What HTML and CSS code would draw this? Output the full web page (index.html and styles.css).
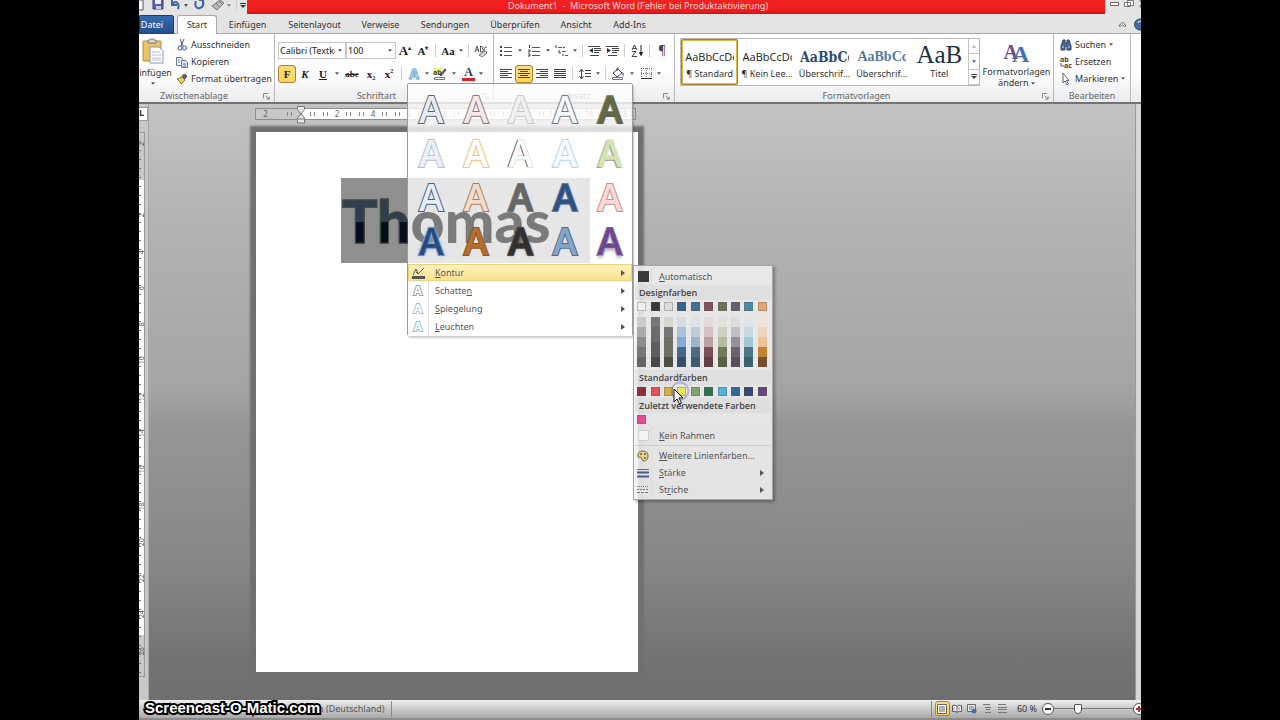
FILE: index.html
```html
<!DOCTYPE html>
<html lang="de">
<head>
<meta charset="utf-8">
<title>Dokument1 - Microsoft Word</title>
<link rel="stylesheet" href="styles.css">
</head>
<body>
<svg class="defs" aria-hidden="true">
  <symbol id="caret" viewBox="0 0 6 4"><path d="M0 0h6L3 4z" fill="#555"/></symbol>
  <symbol id="launch" viewBox="0 0 8 8"><path d="M.5 6V.5H6M3 3l4 4M7 4v3H4" fill="none" stroke="#777"/></symbol>
  <symbol id="right" viewBox="0 0 4 6"><path d="M0 0v6l4-3z" fill="#555"/></symbol>
</svg>
<div class="screen">
  <header class="title-row">
    <div class="quick">
      <button aria-label="Word" class="q-word"><svg width="6" height="13" viewBox="0 0 6 13"><path d="M0 0h4v10H0" fill="#fff" stroke="#456"/></svg></button>
      <button aria-label="Speichern"><svg width="12" height="13" viewBox="0 0 12 13"><path d="M1 -2h10v11H1z" fill="#5a5fae" stroke="#37407c"/><path d="M3 0h6v4H3z" fill="#eef"/><path d="M4 6h5v3H4z" fill="#ccd"/></svg></button>
      <button aria-label="Rückgängig"><svg width="20" height="13" viewBox="0 0 20 13"><path d="M3 0v5h5M3 4c4-4 8-1 6 5" fill="none" stroke="#3c64a6" stroke-width="2"/><path d="M15 4h4l-2 3z" fill="#555"/></svg></button>
      <button aria-label="Wiederholen"><svg width="12" height="13" viewBox="0 0 12 13"><path d="M2 1c-2 5 1 8 4 7 4-1 4-6 2-8M5 0h4v4" fill="none" stroke="#3c64a6" stroke-width="2"/></svg></button>
      <button aria-label="Formen"><svg width="20" height="13" viewBox="0 0 20 13"><path d="M1 6l8-6 4 3-7 7zM5 3l4 5M8 1l4 4" fill="#bbb" stroke="#777"/><path d="M16 4h4l-2 3z" fill="#888"/></svg></button>
      <i class="sep"></i>
      <button aria-label="Anpassen"><svg width="6" height="8" viewBox="0 0 6 8"><path d="M0 3.500h6" stroke="#333"/><path d="M0 5h6L3 8z" fill="#333"/></svg></button>
    </div>
    <div class="title">Dokument1&nbsp; - &nbsp;Microsoft Word (Fehler bei Produktaktivierung)</div>
    <div class="window-buttons">
      <button aria-label="Minimieren"><svg width="9" height="8" viewBox="0 0 9 8"><path d="M.5 2.500h8v3h-8z" fill="#fff" stroke="#666"/></svg></button>
      <button aria-label="Wiederherstellen"><svg width="10" height="8" viewBox="0 0 10 8"><path d="M3.500 .5h6v5h-6zM.5 2.500h6v4h-6z" fill="#fff" stroke="#777"/></svg></button>
      <button aria-label="Schließen"><svg width="8" height="8" viewBox="0 0 8 8"><path d="M1 0l6 7M7 0L1 7" stroke="#777" stroke-width="2"/></svg></button>
    </div>
  </header>

  <nav class="tabs">
    <button class="tab file">Datei</button>
    <button class="tab active">Start</button>
    <button class="tab t-einf">Einfügen</button>
    <button class="tab t-seit">Seitenlayout</button>
    <button class="tab t-verw">Verweise</button>
    <button class="tab t-send">Sendungen</button>
    <button class="tab t-uber">Überprüfen</button>
    <button class="tab t-ansi">Ansicht</button>
    <button class="tab t-addi">Add-Ins</button>
    <span class="tab-tools">
      <svg width="9" height="7" viewBox="0 0 9 7"><path d="M1 5l3.500-4L8 5q-2 1-3.500-1Q3 6 1 5z" fill="#fff" stroke="#666"/></svg>
      <svg width="7" height="13" viewBox="0 0 7 13"><circle cx="6" cy="6.500" r="5.500" fill="#456f9f" stroke="#345"/><path d="M4 5q0-2 3-2" stroke="#fff" fill="none"/></svg>
    </span>
  </nav>

  <section class="ribbon">
    <div class="group g-clip">
      <div class="group-body">
        <button class="paste">
          <svg width="24" height="26" viewBox="0 0 24 26"><rect x="2" y="3" width="18" height="20" rx="1" fill="#eec266" stroke="#b98a37"/><path d="M7 5V2h2q2-3 4 0h2v3z" fill="#ddd" stroke="#777"/><path d="M9 9h9l4 4v12H9z" fill="#fff" stroke="#8a9bb5"/><path d="M11 14h8M11 17h9M11 20h9M11 22h9" stroke="#b5c0d0"/></svg>
          <span>Einfügen</span>
          <svg width="4" height="3"><use href="#caret"/></svg>
        </button>
        <div class="stack">
          <button><svg width="12" height="12" viewBox="0 0 12 12"><path d="M4 0l3 7M8 0L5 7" stroke="#556" fill="none"/><circle cx="4" cy="9" r="2" fill="none" stroke="#2f5ca5"/><circle cx="8.500" cy="9" r="2" fill="none" stroke="#2f5ca5"/></svg>Ausschneiden</button>
          <button><svg width="12" height="12" viewBox="0 0 12 12"><path d="M.5 1.500h5l1 2v6h-6z" fill="#fff" stroke="#5579b0"/><path d="M5.500 4.500h4l2 2v5h-6z" fill="#dce8fa" stroke="#5579b0"/><path d="M7 8h3M7 10h3M2 4h2M2 6h2" stroke="#5579b0"/></svg>Kopieren</button>
          <button><svg width="12" height="12" viewBox="0 0 12 12"><path d="M8 1l3 2-3 4-3-2z" fill="#667" stroke="#445"/><path d="M1 6l5-2 3 3-4 4q-1-3-4-5z" fill="#f0cf63" stroke="#857431"/></svg>Format übertragen</button>
        </div>
      </div>
      <div class="group-name">Zwischenablage<svg class="launch" width="7" height="7"><use href="#launch"/></svg></div>
    </div>

    <div class="group g-font">
      <div class="group-body rows">
        <div class="row">
          <span class="combo c-font"><select aria-label="Schriftart"><option>Calibri (Textkörper)</option></select><svg width="4" height="3"><use href="#caret"/></svg></span>
          <span class="combo c-size"><select aria-label="Schriftgrad"><option>100</option></select><svg width="4" height="3"><use href="#caret"/></svg></span>
          <button class="ic serif big" aria-label="Vergrößern">A<sup>▴</sup></button>
          <button class="ic serif mid" aria-label="Verkleinern">A<sup>▾</sup></button>
          <i class="sep"></i>
          <button class="ic serif mid">Aa</button><button class="ar slim" aria-label="Mehr"><svg width="4" height="3"><use href="#caret"/></svg></button>
          <i class="sep"></i>
          <button class="ic" aria-label="Formatierung löschen"><svg width="14" height="14" viewBox="0 0 14 14"><path d="M1 8l2-6 2 6M2 6h3M6.500 2v6h2q2-2 0-3 2-2-2-3M13 3q-3 0-3 2.500t3 2.500" fill="none" stroke="#555"/><path d="M5 11l6-4 2 2-5 4z" fill="#ddd" stroke="#777"/></svg></button>
        </div>
        <div class="row">
          <button class="ic serif on">F</button><button class="ic serif it">K</button><button class="ic serif un">U</button><button class="ar" aria-label="Mehr"><svg width="4" height="3"><use href="#caret"/></svg></button>
          <button class="ic serif st">abc</button><button class="ic serif">x<sub>2</sub></button><button class="ic serif">x<sup>2</sup></button>
          <i class="sep"></i>
          <button class="ic fx-a">A</button><button class="ar slim" aria-label="Mehr"><svg width="4" height="3"><use href="#caret"/></svg></button>
          <button class="ic" aria-label="Hervorheben"><svg width="14" height="14" viewBox="0 0 14 14"><path d="M1 1h8v7H1z" fill="#f1ee78"/><text x="0" y="8" class="tiny-icon">ab</text><path d="M7 8l5-6 1 1-5 6z" fill="#777" stroke="#444"/><path d="M1.500 10.500h10v2h-10z" fill="#fff" stroke="#777"/></svg></button><button class="ar" aria-label="Mehr"><svg width="4" height="3"><use href="#caret"/></svg></button>
          <button class="ic serif red-a">A</button><button class="ar slim" aria-label="Mehr"><svg width="4" height="3"><use href="#caret"/></svg></button>
        </div>
      </div>
      <div class="group-name">Schriftart<svg class="launch" width="7" height="7"><use href="#launch"/></svg></div>
    </div>

    <div class="group g-para">
      <div class="group-body rows">
        <div class="row">
          <button class="ic" aria-label="Aufzählung"><svg width="12" height="12" viewBox="0 0 12 12"><path d="M0 2h2M0 6h2M0 10h2" stroke="#345" stroke-width="2"/><path d="M4 2.500h8M4 6.500h8M4 10.500h8" stroke="#555"/></svg></button><button class="ar" aria-label="Mehr"><svg width="4" height="3"><use href="#caret"/></svg></button>
          <button class="ic" aria-label="Nummerierung"><svg width="12" height="12" viewBox="0 0 12 12"><path d="M1.500 0v3M0 5h2v2H0M0 9h2v2H0" stroke="#345" fill="none"/><path d="M4 2.500h8M4 6.500h8M4 10.500h8" stroke="#555"/></svg></button><button class="ar" aria-label="Mehr"><svg width="4" height="3"><use href="#caret"/></svg></button>
          <button class="ic" aria-label="Liste mit mehreren Ebenen"><svg width="13" height="12" viewBox="0 0 13 12"><path d="M1 0v3M4 5v3h2M8 9v2" stroke="#345" fill="none"/><path d="M3 2.500h7M7 6.500h5M10 10.500h3" stroke="#555" stroke-dasharray="4 1"/></svg></button><button class="ar slim" aria-label="Mehr"><svg width="4" height="3"><use href="#caret"/></svg></button>
          <i class="sep"></i>
          <button class="ic" aria-label="Einzug verkleinern"><svg width="13" height="12" viewBox="0 0 13 12"><path d="M0 1.500h12M6 3.500h7M6 5.500h7M6 7.500h5M2 10.500h9" stroke="#444"/><path d="M5 3v5L1 5.500z" fill="#235"/></svg></button>
          <button class="ic" aria-label="Einzug vergrößern"><svg width="13" height="12" viewBox="0 0 13 12"><path d="M0 1.500h12M6 3.500h7M6 5.500h7M6 7.500h5M2 10.500h9" stroke="#444"/><path d="M1 3v5l4-2.500z" fill="#235"/></svg></button>
          <i class="sep"></i>
          <button class="ic" aria-label="Sortieren"><svg width="13" height="13" viewBox="0 0 13 13"><path d="M1 6l2.500-5L6 6M2 4.500h3M1 7.500h4l-4 5h5" fill="none" stroke="#444"/><path d="M10 1v9M8.500 8.500l1.500 3 1.500-3z" fill="#222" stroke="#222"/></svg></button>
          <i class="sep"></i>
          <button class="ic pil">¶</button>
        </div>
        <div class="row">
          <button class="ic" aria-label="Links"><svg width="12" height="11" viewBox="0 0 12 11"><path d="M0 1.500h12M0 3.500h8M0 5.500h12M0 7.500h8M0 9.500h12" stroke="#444"/></svg></button>
          <button class="ic on" aria-label="Zentriert"><svg width="12" height="11" viewBox="0 0 12 11"><path d="M0 1.500h12M2 3.500h8M0 5.500h12M2 7.500h8M0 9.500h12" stroke="#554a1a"/></svg></button>
          <button class="ic" aria-label="Rechts"><svg width="12" height="11" viewBox="0 0 12 11"><path d="M0 1.500h12M4 3.500h8M0 5.500h12M4 7.500h8M0 9.500h12" stroke="#444"/></svg></button>
          <button class="ic" aria-label="Blocksatz"><svg width="12" height="11" viewBox="0 0 12 11"><path d="M0 1.500h12M0 3.500h12M0 5.500h12M0 7.500h12M0 9.500h12" stroke="#444"/></svg></button>
          <i class="sep"></i>
          <button class="ic" aria-label="Zeilenabstand"><svg width="12" height="12" viewBox="0 0 12 12"><path d="M2.500 2v8M.5 4l2-3 2 3M.5 8l2 3 2-3" stroke="#357" fill="none"/><path d="M6 2.500h6M6 5.500h6M6 8.500h6" stroke="#444"/></svg></button><button class="ar slim" aria-label="Mehr"><svg width="4" height="3"><use href="#caret"/></svg></button>
          <i class="sep"></i>
          <button class="ic" aria-label="Schattierung"><svg width="14" height="13" viewBox="0 0 14 13"><path d="M2 6l5-4 4 4-5 4zM6 4q-1-4 2-3" fill="#fff" stroke="#445"/><path d="M11 5q3 1 1 5z" fill="#3c64a6"/><path d="M1.500 10.500h10v2h-10z" fill="#fff" stroke="#777"/></svg></button><button class="ar" aria-label="Mehr"><svg width="4" height="3"><use href="#caret"/></svg></button>
          <button class="ic" aria-label="Rahmen"><svg width="11" height="11" viewBox="0 0 11 11"><path d="M.5 0v10M5.500 0v10M10.500 0v10M0 .5h11M0 5.500h11" stroke="#777" stroke-dasharray="1 1"/><path d="M0 10.500h11" stroke="#333"/></svg></button><button class="ar slim" aria-label="Mehr"><svg width="4" height="3"><use href="#caret"/></svg></button>
        </div>
      </div>
      <div class="group-name">Absatz<svg class="launch" width="7" height="7"><use href="#launch"/></svg></div>
    </div>

    <div class="group g-styles">
      <div class="group-body">
        <div class="style-gallery">
          <button class="style chosen"><b class="s-norm">AaBbCcDc</b><span>¶ Standard</span></button>
          <button class="style"><b class="s-norm">AaBbCcDc</b><span>¶ Kein Lee...</span></button>
          <button class="style"><b class="s-h1">AaBbCc</b><span>Überschrif...</span></button>
          <button class="style"><b class="s-h2">AaBbCc</b><span>Überschrif...</span></button>
          <button class="style"><b class="s-title">AaB</b><span>Titel</span></button>
          <div class="scroller">
            <button aria-label="Nach oben"><svg class="flip" width="4" height="3"><use href="#caret"/></svg></button>
            <button aria-label="Nach unten"><svg width="4" height="3"><use href="#caret"/></svg></button>
            <button aria-label="Alle"><svg width="6" height="6" viewBox="0 0 6 6"><path d="M0 .5h6" stroke="#444"/><path d="M0 2h6L3 5z" fill="#444"/></svg></button>
          </div>
        </div>
        <button class="change">
          <span class="change-icon"><b>A</b><b>A</b></span>
          <span>Formatvorlagen</span>
          <span>ändern <svg width="4" height="3"><use href="#caret"/></svg></span>
        </button>
      </div>
      <div class="group-name">Formatvorlagen<svg class="launch" width="7" height="7"><use href="#launch"/></svg></div>
    </div>

    <div class="group g-edit">
      <div class="group-body">
        <div class="stack">
          <button><svg width="12" height="12" viewBox="0 0 12 12"><path d="M3 1h2v3h2V1h2l2 6v4H7V7H5v4H1V7z" fill="#4a6795" stroke="#2c4368"/><path d="M2 8h2M8 8h2" stroke="#cde"/></svg>Suchen <svg class="c" width="4" height="3"><use href="#caret"/></svg></button>
          <button><svg width="12" height="12" viewBox="0 0 12 12"><text x="0" y="6" class="tiny-icon">ab</text><text x="4" y="12" class="tiny-icon">ac</text><path d="M1 7v3h3" stroke="#357" fill="none"/></svg>Ersetzen</button>
          <button><svg width="12" height="12" viewBox="0 0 12 12"><path d="M3 0v10l2-2 2 4 1.500-1-2-3.500H9z" fill="#fff" stroke="#567"/></svg>Markieren <svg class="c" width="4" height="3"><use href="#caret"/></svg></button>
        </div>
      </div>
      <div class="group-name">Bearbeiten</div>
    </div>
  </section>

  <main class="workspace">
    <div class="v-side">
      <span class="tab-box">L</span>
      <div class="v-ruler"><span class="first">2</span><span></span><span>2</span><span>4</span><span>6</span><span>8</span><span>10</span><span>12</span><span>14</span><span>16</span><span>18</span><span>20</span><span>22</span><span>24</span><span>26</span></div>
    </div>
    <div class="canvas">
      <div class="h-ruler">
        <span>2</span><span class="zero"><svg width="10" height="18" viewBox="0 0 10 18"><path d="M1.500 .5h7v3L5 8l3.500 4v5h-7v-5L5 8 1.500 3.500zM1.500 13h7" fill="#e6e6e6" stroke="#777"/></svg></span><span>2</span><span>4</span><span>6</span><span>8</span><span>10</span><span>12</span><span>14</span><span>16</span><span>18</span>
      </div>
      <article class="page">
        <div class="selection"><p class="word"><span class="lead">Th</span><span class="rest">omas</span></p></div>
      </article>
    </div>
    <div class="v-scroll"></div>
  </main>

  <footer class="status">
    <span class="lang">Deutsch (Deutschland)</span>
    <i class="st-sep"></i>
    <span class="grow"></span>
    <i class="st-sep"></i>
    <button class="view on" aria-label="Seitenlayout"><svg width="10" height="10" viewBox="0 0 10 10"><path d="M.5 .5h9v9h-9z" fill="#fff" stroke="#666"/><path d="M2 3h6M2 5h6M2 7h6" stroke="#666"/></svg></button>
    <button class="view" aria-label="Lesen"><svg width="10" height="10" viewBox="0 0 10 10"><path d="M.5 1.500q3-1 4.500 1 1.500-2 4.500-1v6q-3-1-4.500 1-1.500-2-4.500-1zM5 2v6" fill="#fff" stroke="#555"/><path d="M2 3v3M7 3v3" stroke="#888"/></svg></button>
    <button class="view" aria-label="Weblayout"><svg width="10" height="10" viewBox="0 0 10 10"><path d="M.5 .5h8v7h-8z" fill="#eee" stroke="#666"/><path d="M2 3h5M2 5h3" stroke="#666"/><circle cx="7" cy="7" r="2.500" fill="#4a6c96"/></svg></button>
    <button class="view" aria-label="Gliederung"><svg width="9" height="9" viewBox="0 0 9 9"><path d="M0 .5h7M2 3.500h6M3 5.500h4M2 8.500h6" stroke="#777"/></svg></button>
    <button class="view" aria-label="Entwurf"><svg width="9" height="9" viewBox="0 0 9 9"><path d="M0 .5h8M0 3.500h9M0 5.500h9M0 8.500h9" stroke="#777"/></svg></button>
    <span class="pct">60 %</span>
    <button class="round" aria-label="Verkleinern"><svg width="12" height="12" viewBox="0 0 12 12"><circle cx="6" cy="6" r="5.500" fill="#fff" stroke="#555"/><path d="M3 6h6" stroke="#333" stroke-width="2"/></svg></button>
    <input class="zoom" type="range" min="10" max="190" value="60" aria-label="Zoom">
    <button class="round plus" aria-label="Vergrößern"><svg width="12" height="12" viewBox="0 0 12 12"><circle cx="6" cy="6" r="5.500" fill="#fff" stroke="#555"/><path d="M3 6h6M6 3v6" stroke="#a33" stroke-width="2"/></svg></button>
  </footer>

  <div class="menu-back"></div>
  <div class="menu" role="menu">
    <div class="gallery">
      <button class="g a1">A</button><button class="g a2">A</button><button class="g a3">A</button><button class="g a4">A</button><button class="g a5">A</button>
      <button class="g b1">A</button><button class="g b2">A</button><button class="g b3">A</button><button class="g b4">A</button><button class="g b5">A</button>
      <button class="g c1">A</button><button class="g c2">A</button><button class="g c3">A</button><button class="g c4">A</button><button class="g c5">A</button>
      <button class="g d1">A</button><button class="g d2">A</button><button class="g d3">A</button><button class="g d4">A</button><button class="g d5">A</button>
    </div>
    <div class="items">
      <button class="item hot"><span class="mi"><svg width="13" height="12" viewBox="0 0 13 12"><path d="M0 10.500h13" stroke="#555" stroke-width="3"/><path d="M1 8l3-6 2 5 6-6M6 7L4 5" fill="none" stroke="#555"/></svg></span><span class="ml"><u>K</u>ontur</span><svg width="4" height="6"><use href="#right"/></svg></button>
      <button class="item"><span class="mi m1">A</span><span class="ml">Schatte<u>n</u></span><svg width="4" height="6"><use href="#right"/></svg></button>
      <button class="item"><span class="mi m2">A</span><span class="ml"><u>S</u>piegelung</span><svg width="4" height="6"><use href="#right"/></svg></button>
      <button class="item"><span class="mi m3">A</span><span class="ml"><u>L</u>euchten</span><svg width="4" height="6"><use href="#right"/></svg></button>
    </div>
  </div>

  <div class="submenu" role="menu">
    <button class="sub"><span class="si"><i class="auto"></i></span><span class="sl"><u>A</u>utomatisch</span></button>
    <h2>Designfarben</h2>
    <div class="swatches">
      <i class="k-white"></i><i class="k-black"></i><i class="k-light"></i><i class="k-blue"></i><i class="k-steel"></i><i class="k-wine"></i><i class="k-olive"></i><i class="k-grape"></i><i class="k-aqua"></i><i class="k-orange"></i>
    </div>
    <div class="shades">
      <i class="h1"></i><i class="h2"></i><i class="h3"></i><i class="h4"></i><i class="h5"></i><i class="h6"></i><i class="h7"></i><i class="h8"></i><i class="h9"></i><i class="h10"></i>
    </div>
    <h2>Standardfarben</h2>
    <div class="swatches">
      <i class="n1"></i><i class="n2"></i><i class="n3"></i><i class="n4"></i><i class="n5"></i><i class="n6"></i><i class="n7"></i><i class="n8"></i><i class="n9"></i><i class="n10"></i>
    </div>
    <h2>Zuletzt verwendete Farben</h2>
    <div class="swatches recent"><i class="pink"></i></div>
    <button class="sub none"><span class="si"><i class="empty"></i></span><span class="sl"><u>K</u>ein Rahmen</span></button>
    <button class="sub"><span class="si"><svg width="12" height="12" viewBox="0 0 12 12"><path d="M6 1q5 0 5 5 0 5-5 5-1 0-1-2T1 7Q0 1 6 1z" fill="#e6d28a" stroke="#7a6a3a"/><circle cx="4" cy="4" r="1" fill="#a33"/><circle cx="8" cy="4" r="1" fill="#36a"/><circle cx="8" cy="8" r="1" fill="#383"/></svg></span><span class="sl"><u>W</u>eitere Linienfarben...</span></button>
    <button class="sub"><span class="si"><svg width="12" height="10" viewBox="0 0 12 10"><path d="M0 1.500h12" stroke="#566b9a"/><path d="M0 4.500h12" stroke="#455a8a" stroke-width="2"/><path d="M0 8.500h12" stroke="#455a8a" stroke-width="2"/></svg></span><span class="sl"><u>S</u>tärke</span><svg width="4" height="6"><use href="#right"/></svg></button>
    <button class="sub"><span class="si"><svg width="12" height="9" viewBox="0 0 12 9"><path d="M0 1.500h12" stroke="#777" stroke-dasharray="1 1"/><path d="M0 4.500h12" stroke="#777" stroke-dasharray="2 1"/><path d="M0 7.500h12" stroke="#777" stroke-dasharray="3 1"/></svg></span><span class="sl">St<u>r</u>iche</span><svg width="4" height="6"><use href="#right"/></svg></button>
  </div>

  <svg class="pointer" width="26" height="26" viewBox="0 0 26 26"><circle cx="12" cy="11" r="8.500" fill="none" stroke="#7d78b8" stroke-width="2" opacity=".45"/><path d="M6 9v13l3-3 2.500 5 2-1-2.500-5h4z" fill="#fff" stroke="#111"/></svg>
  <div class="watermark">Screencast-O-Matic.com</div>
</div>
</body>
</html>
```
FILE: styles.css
```css
* { box-sizing: border-box; }
body { margin: 0; padding: 0 139px; background: #000; font: 9px/12px "Noto Sans", sans-serif; color: #333; }
button, select, input { font: inherit; color: inherit; padding: 0; margin: 0; border: 0; background: none; }
button { display: flex; align-items: center; justify-content: center; white-space: nowrap; }
svg { flex: none; display: block; }
i { display: block; flex: none; }
.defs { position: absolute; width: 0; height: 0; }
.screen { position: relative; display: flex; flex-direction: column; min-height: 100vh; overflow: hidden; background: #e4e4e4; }

/* title row */
.title-row { display: flex; height: 14px; }
.quick { display: flex; align-items: flex-start; width: 108px; gap: 5px; }
.quick .sep { height: 11px; margin: 0 -2px 0 0; width: 1px; }
.q-word { width: 8px; justify-content: flex-start; }
.title { flex: 1; padding-right: 76px; background: linear-gradient(#f32222, #ee1c1c 80%, #c91414); color: #fbd9d5; text-align: center; line-height: 12px; white-space: nowrap; }
.window-buttons { display: flex; width: 36px; padding-left: 5px; gap: 5px; align-items: flex-start; }

/* tabs */
.tabs { display: flex; height: 20px; padding-top: 1px; border-bottom: 1px solid #a9a9a9; background: #e4e4e4; }
.tab { height: 19px; }
.file { width: 35px; padding-right: 9px; margin-right: 3px; color: #fff; background: linear-gradient(#356ab0, #234f8f); border: 1px solid #1c3f74; border-radius: 0 2px 0 0; }
.active { width: 40px; height: 20px; padding-bottom: 2px; background: #fff; border: 1px solid #a9a9a9; border-bottom: 0; border-radius: 3px 3px 0 0; }
.t-einf { width: 61px; }
.t-seit { width: 73px; }
.t-verw { width: 59px; }
.t-send { width: 70px; }
.t-uber { width: 70px; }
.t-ansi { width: 52px; }
.t-addi { width: 55px; }
.tab-tools { display: flex; flex: 1; justify-content: flex-end; align-items: center; gap: 7px; }

/* ribbon */
.ribbon { display: flex; height: 70px; background: linear-gradient(#fff, #fdfdfd 60%, #eaebed); border-bottom: 2px solid #737373; }
.group { display: flex; flex-direction: column; border-right: 1px solid #b9b9b9; overflow: hidden; }
.group-body { display: flex; flex: 1; padding-top: 2px; }
.group-name { position: relative; height: 13px; line-height: 13px; text-align: center; color: #666; }
.launch { position: absolute; right: 4px; top: 4px; }
.g-clip { width: 136px; }
.g-font { width: 219px; }
.g-para { width: 181px; }
.g-styles { width: 379px; }
.g-edit { width: 77px; }
.g-clip .group-name { padding-right: 25px; }
.g-font .group-name, .g-para .group-name, .g-styles .group-name { padding-right: 15px; }
.paste { flex-direction: column; width: 38px; margin: 0 0 3px -5px; gap: 3px; }
.stack { display: flex; flex-direction: column; }
.stack button { height: 17px; gap: 3px; justify-content: flex-start; }
.g-clip .stack { padding-left: 4px; }
.g-edit .stack { padding-left: 6px; }
.rows { flex-direction: column; gap: 4px; padding: 7px 3px 0; }
.row { display: flex; height: 19px; align-items: center; }
.combo { position: relative; display: flex; align-items: center; height: 17px; border: 1px solid #c6c6c6; background: #fff; }
.combo select { appearance: none; width: 100%; padding: 0 10px 0 1px; outline: 0; color: #222; text-overflow: clip; }
.combo svg { position: absolute; right: 3px; top: 6px; }
.c-font { width: 68px; }
.c-size { width: 50px; }
.ic { width: 18px; height: 18px; color: #222; }
.ar { width: 10px; height: 18px; }
.ar.slim { width: 8px; }
.sep { width: 1px; height: 13px; margin: 0 3px; background: #cfcfcf; }
.serif { font: bold 11px/12px "Liberation Serif", serif; }
.serif sup, .serif sub { font-size: 6px; line-height: 6px; }
.serif sup { align-self: flex-start; margin-top: 3px; }
.serif sub { align-self: flex-end; margin-bottom: 2px; }
.big { font-size: 13px; }
.it { font-style: italic; }
.un { text-decoration: underline; }
.st { width: 20px; font-size: 9px; text-decoration: line-through; }
.on { background: linear-gradient(#fbdc7c, #f9d45e); border: 1px solid #a8862f; border-radius: 3px; }
.fx-a { font: bold 14px/14px "Open Sans", sans-serif; color: #d9eefb; -webkit-text-stroke: 1px #6aa5d0; }
.red-a { height: 14px; font-size: 12px; line-height: 10px; color: #2b3a63; border-bottom: 3px solid #d8232a; width: 13px; margin: 0 2px 0 3px; }
.tiny-icon { font: bold 7px "Noto Sans", sans-serif; fill: #444; }
.pil { font-size: 12px; color: #444; }
.style-gallery { display: flex; height: 48px; width: 300px; margin: 2px 0 0 5px; border: 1px solid #b8b8b8; background: #fff; }
.style { flex: 1 1 20px; flex-direction: column; justify-content: flex-end; padding-bottom: 5px; min-width: 0; overflow: hidden; }
.style b { display: block; width: 49px; overflow: hidden; font-weight: 400; }
.chosen { border: 2px solid #e3b73a; border-radius: 2px; outline: 1px solid #a78334; outline-offset: -1px; padding-bottom: 3px; }
.style .s-norm { font: 11px/22px "Open Sans", sans-serif; color: #222; }
.style .s-h1 { font: bold 14px/22px "DejaVu Serif Condensed", "Liberation Serif", serif; color: #2d4d75; }
.style .s-h2 { font: bold 14px/22px "Liberation Serif", serif; color: #557ba4; }
.style .s-title { font: 25px/26px "Liberation Serif", serif; color: #1e3046; }
.scroller { display: flex; flex-direction: column; width: 11px; border-left: 1px solid #c4c4c4; }
.scroller button { flex: 1; border-bottom: 1px solid #c4c4c4; }
.flip { transform: rotate(180deg); opacity: .5; }
.change { flex: 1; flex-direction: column; line-height: 11px; }
.change-icon { display: flex; height: 28px; align-items: center; }
.change-icon b { font: bold 20px/20px "Liberation Serif", serif; color: #6d4a86; }
.change-icon b + b { font-size: 24px; color: #4a6fb0; margin: 4px 0 0 -6px; }
.change svg { display: inline-block; vertical-align: middle; }

/* workspace */
.workspace { display: flex; flex: 1; background: linear-gradient(#c3c3c3, #b5b5b5 17%, #a4a4a4 48%, #969696 54%, #868686 78%, #747474 92%, #6f6f6f); }
.v-side { display: flex; flex-direction: column; width: 10px; border-right: 1px solid #aaa; background: #c8c8c8; }
.tab-box { width: 9px; height: 14px; margin: 3px 0 11px; border: 1px solid #999; border-left: 0; background: #fff; font-weight: 700; line-height: 10px; }
.v-ruler { display: flex; flex-direction: column; width: 6px; height: 545px; padding-bottom: 7px; border: 1px solid #999; border-left: 0; background: repeating-linear-gradient(transparent 0 8px, #777 8px 9px) 0 0 / 2px 100% no-repeat, linear-gradient(#c8c8c8 47px, #fff 47px 502px, #c8c8c8 502px); }
.v-ruler span { flex: 1; writing-mode: vertical-rl; transform: rotate(180deg); font-size: 7px; line-height: 6px; text-align: center; color: #555; }
.v-ruler .first { flex: 0 0 28px; padding-top: 7px; }
.canvas { flex: 1; padding: 4px 0 28px 106px; }
.h-ruler { display: flex; width: 381px; height: 12px; margin: 0 0 12px 10px; margin-left: 0; border: 1px solid #8d8d8d; background: linear-gradient(90deg, #c8c8c8 46px, #fff 46px 374px, #c8c8c8 374px); }
.h-ruler span { flex: 0 0 36px; font-size: 8px; line-height: 10px; text-align: center; color: #666; background: linear-gradient(90deg, transparent 4px, #888 4px 5px, transparent 5px 8px, #888 8px 9px, transparent 9px 27px, #888 27px 28px, transparent 28px 31px, #888 31px 32px, transparent 32px) center / 100% 4px no-repeat; }
.h-ruler span:first-child { flex-basis: 27px; padding-right: 8px; background: none; }
.h-ruler span:last-child { flex-basis: 28px; padding-left: 4px; background: none; }
.h-ruler .zero svg { margin: -3px auto 0; }
.page { width: 382px; height: 540px; margin-left: 1px; padding-top: 46px; background: #fff; box-shadow: 0 0 2px 6px #707070; }
.selection { width: 249px; height: 85px; margin-left: 85px; background: #8f8f8f; }
.word { position: relative; z-index: 2; margin: 0; padding-left: 1px; font: 900 59px/86px Lato, sans-serif; white-space: nowrap; }
.lead { color: transparent; background: linear-gradient(#2f3d4f 52%, #050c20 52%); -webkit-background-clip: text; background-clip: text; -webkit-text-stroke: 1px #45503f; }
.rest { color: #7b7b7b; }
.v-scroll { width: 6px; background: #d6d6d6; border-left: 1px solid #999; }

/* status bar */
.status { display: flex; align-items: center; height: 20px; padding-bottom: 1px; border-bottom: 2px solid #8b8b8b; background: linear-gradient(#f0f0f0, #cfcfcf 40%, #a9a9a9); }
.lang { padding-left: 150px; color: #555; }
.st-sep { width: 1px; height: 16px; margin: 0 3px 0 6px; background: #888; }
.grow { flex: 1; }
.view { width: 15px; height: 15px; }
.pct { padding: 0 5px 0 7px; }
.zoom { appearance: none; width: 79px; height: 14px; background: linear-gradient(#777, #777) center / 100% 1px no-repeat; }
.zoom::-webkit-slider-thumb { appearance: none; width: 8px; height: 10px; background: #fff; border: 1px solid #555; border-radius: 1px 1px 4px 4px; }
.plus { width: 8px; overflow: hidden; justify-content: flex-start; }

/* effects menu */
.menu-back, .menu { position: absolute; left: 268px; top: 83px; width: 226px; height: 253px; }
.menu-back { z-index: 1; border: 1px solid #9c9c9c; border-radius: 2px; background: rgba(255, 255, 255, .78); box-shadow: 1px 2px 2px rgba(0, 0, 0, .2); }
.menu { z-index: 3; padding: 4px 1px 1px 2px; }
.gallery { display: grid; grid-template: repeat(4, 44px) / repeat(5, 1fr); height: 177px; }
.g { font: 600 37px/44px "Open Sans", sans-serif; color: #f4f4f4; -webkit-text-stroke: 2px #555; paint-order: stroke fill; }
.a1 { color: #e8ecf0; -webkit-text-stroke-color: #5a6570; }
.a2 { color: #f3e9ea; -webkit-text-stroke-color: #907478; }
.a3 { color: #f0f0f0; -webkit-text-stroke-color: #c8c8c8; }
.a4 { color: #f4f8fc; -webkit-text-stroke-color: #6d7985; }
.a5 { color: #626b47; -webkit-text-stroke-color: #7f8863; text-shadow: 1px 1px 1px #555; }
.b1 { color: #e9eff5; -webkit-text-stroke-color: #b5c1cc; }
.b2 { color: #fff; -webkit-text-stroke-color: #f1c283; text-shadow: 0 0 3px #f4c98d; }
.b3 { color: #fff; -webkit-text-stroke: 1px #ccc; text-shadow: -1px 0 0 #555; }
.b4 { color: #f6fbff; -webkit-text-stroke-color: #b3d4ee; }
.b5 { color: #d5e2b1; -webkit-text-stroke-color: #e1ebc8; text-shadow: -1px 1px 1px #999; }
.c1 { color: #e5edf9; -webkit-text-stroke-color: #4a5c7c; }
.c2 { color: #f0dccb; -webkit-text-stroke-color: #a97c5e; }
.c3 { color: #666; -webkit-text-stroke-color: #777; }
.c4 { color: #30507f; -webkit-text-stroke-color: #5d7ca6; }
.c5 { color: #f7d9d7; -webkit-text-stroke-color: #c98f8c; }
.d1 { color: #2a4a7d; -webkit-text-stroke-color: #6285b8; text-shadow: 0 0 4px #8bb4ea; }
.d2 { color: #b46e30; -webkit-text-stroke-color: #8f5527; }
.d3 { color: #303030; -webkit-text-stroke-color: #505050; text-shadow: 0 0 3px #333; }
.d4 { color: #86a6c8; -webkit-text-stroke-color: #4d6b8c; }
.d5 { color: #6c4691; -webkit-text-stroke-color: #7d5aa0; text-shadow: 0 3px 3px #bbb; }
.items { display: flex; flex-direction: column; margin-left: -1px; background: #fff; }
.item { height: 17px; margin-bottom: 1px; padding-right: 7px; }
.hot { background: linear-gradient(#fff3c4, #fbe18b); outline: 1px solid #ecd27a; outline-offset: -1px; }
.mi { display: flex; width: 21px; height: 18px; align-items: center; justify-content: center; border-right: 1px solid #e2e2e2; font: bold 12px/17px "Open Sans", sans-serif; color: #fff; paint-order: stroke fill; }
.hot .mi { border-color: transparent; }
.m1 { -webkit-text-stroke: 2px #999; }
.m2 { -webkit-text-stroke: 2px #b4c1cc; }
.m3 { -webkit-text-stroke: 2px #8cbadb; }
.ml, .sl { flex: 1; text-align: left; }
.ml { padding-left: 6px; color: #555; }

/* colour submenu */
.submenu { position: absolute; z-index: 4; left: 494px; top: 265px; width: 140px; padding: 2px 1px 1px; border: 1px solid #a5a5a5; background: rgba(240, 240, 240, .87); box-shadow: 2px 2px 3px rgba(0, 0, 0, .3); }
.sub { width: 100%; height: 17px; padding-right: 7px; color: #555; }
.si { display: flex; width: 17px; height: 17px; align-items: center; justify-content: center; border-right: 1px solid #ddd; }
.sl { padding-left: 7px; }
.submenu h2 { margin: 0; padding-left: 4px; font: 600 9px/15px "Open Sans", sans-serif; color: #444; background: rgba(215, 215, 215, .5); white-space: nowrap; }
.swatches, .shades { display: grid; grid-template-columns: repeat(10, 1fr); justify-items: center; padding-right: 2px; }
.swatches { height: 13px; align-items: center; }
.swatches i { width: 9px; height: 9px; border: 1px solid rgba(90, 90, 90, .35); }
.shades { height: 57px; padding-top: 4px; }
.shades i { width: 9px; height: 50px; }
.auto { width: 11px; height: 11px; background: #3a3a3a; }
.empty { width: 11px; height: 11px; border: 1px solid #ccc; background: #f4f4f4; }
.submenu .none { height: 20px; margin-bottom: 1px; border-bottom: 1px solid #ccc; }
.k-white { background: #eee; } .k-black { background: #383838; } .k-light { background: #dcdcdc; } .k-blue { background: #3d6288; } .k-steel { background: #486f93; }
.k-wine { background: #86505a; } .k-olive { background: #6b7555; } .k-grape { background: #66626e; } .k-aqua { background: #4d8ba6; } .k-orange { background: #e4a66e; }
.h1 { background: linear-gradient(#ccc 20%, #aaa 20% 40%, #8c8c8c 40% 60%, #777 60% 80%, #666 80%); }
.h2 { background: linear-gradient(#777 20%, #6b6b6b 20% 50%, #5d5d5d 50% 80%, #484848 80%); }
.h3 { background: linear-gradient(#d6d6d0 20%, #777 20% 40%, #6e7064 40% 80%, #4d4d47 80%); }
.h4 { background: linear-gradient(#d4dce6 20%, #abc0da 20% 40%, #86aad5 40% 60%, #456789 60% 80%, #384f69 80%); }
.h5 { background: linear-gradient(#dde3e8 20%, #c0ccd8 20% 40%, #9cb5cc 40% 60%, #4f6b82 60% 80%, #415a6f 80%); }
.h6 { background: linear-gradient(#e4dada 20%, #d5c1c2 20% 40%, #bf9fa0 40% 60%, #7b5055 60% 80%, #653f43 80%); }
.h7 { background: linear-gradient(#e0e2dc 20%, #ccd1c2 20% 40%, #b4bda2 40% 60%, #727b5c 60% 80%, #586047 80%); }
.h8 { background: linear-gradient(#ddd 20%, #c2c0c6 20% 40%, #96929c 40% 60%, #69646f 60% 80%, #56515b 80%); }
.h9 { background: linear-gradient(#dbe6ea 20%, #c4dbe1 20% 40%, #a3c7d2 40% 60%, #4c7885 60% 80%, #3d626d 80%); }
.h10 { background: linear-gradient(#efe3d8 20%, #efd5bb 20% 40%, #ecc296 40% 60%, #c58235 60% 80%, #76502c 80%); }
.n1 { background: #8d2f33; } .n2 { background: #e25254; } .n3 { background: #d9ab48; } .n4 { background: #ece65f; } .n5 { background: #82a36d; }
.n6 { background: #2d7352; } .n7 { background: #52b0da; } .n8 { background: #35689a; } .n9 { background: #35486f; } .n10 { background: #62497d; }
.pink { background: #e34a97; }

.pointer { position: absolute; z-index: 5; left: 529px; top: 380px; }
.watermark { position: absolute; z-index: 5; left: 6px; bottom: 3px; font: bold 15px/18px "Liberation Sans", sans-serif; color: #fff; -webkit-text-stroke: 4px #000; paint-order: stroke fill; }
```
